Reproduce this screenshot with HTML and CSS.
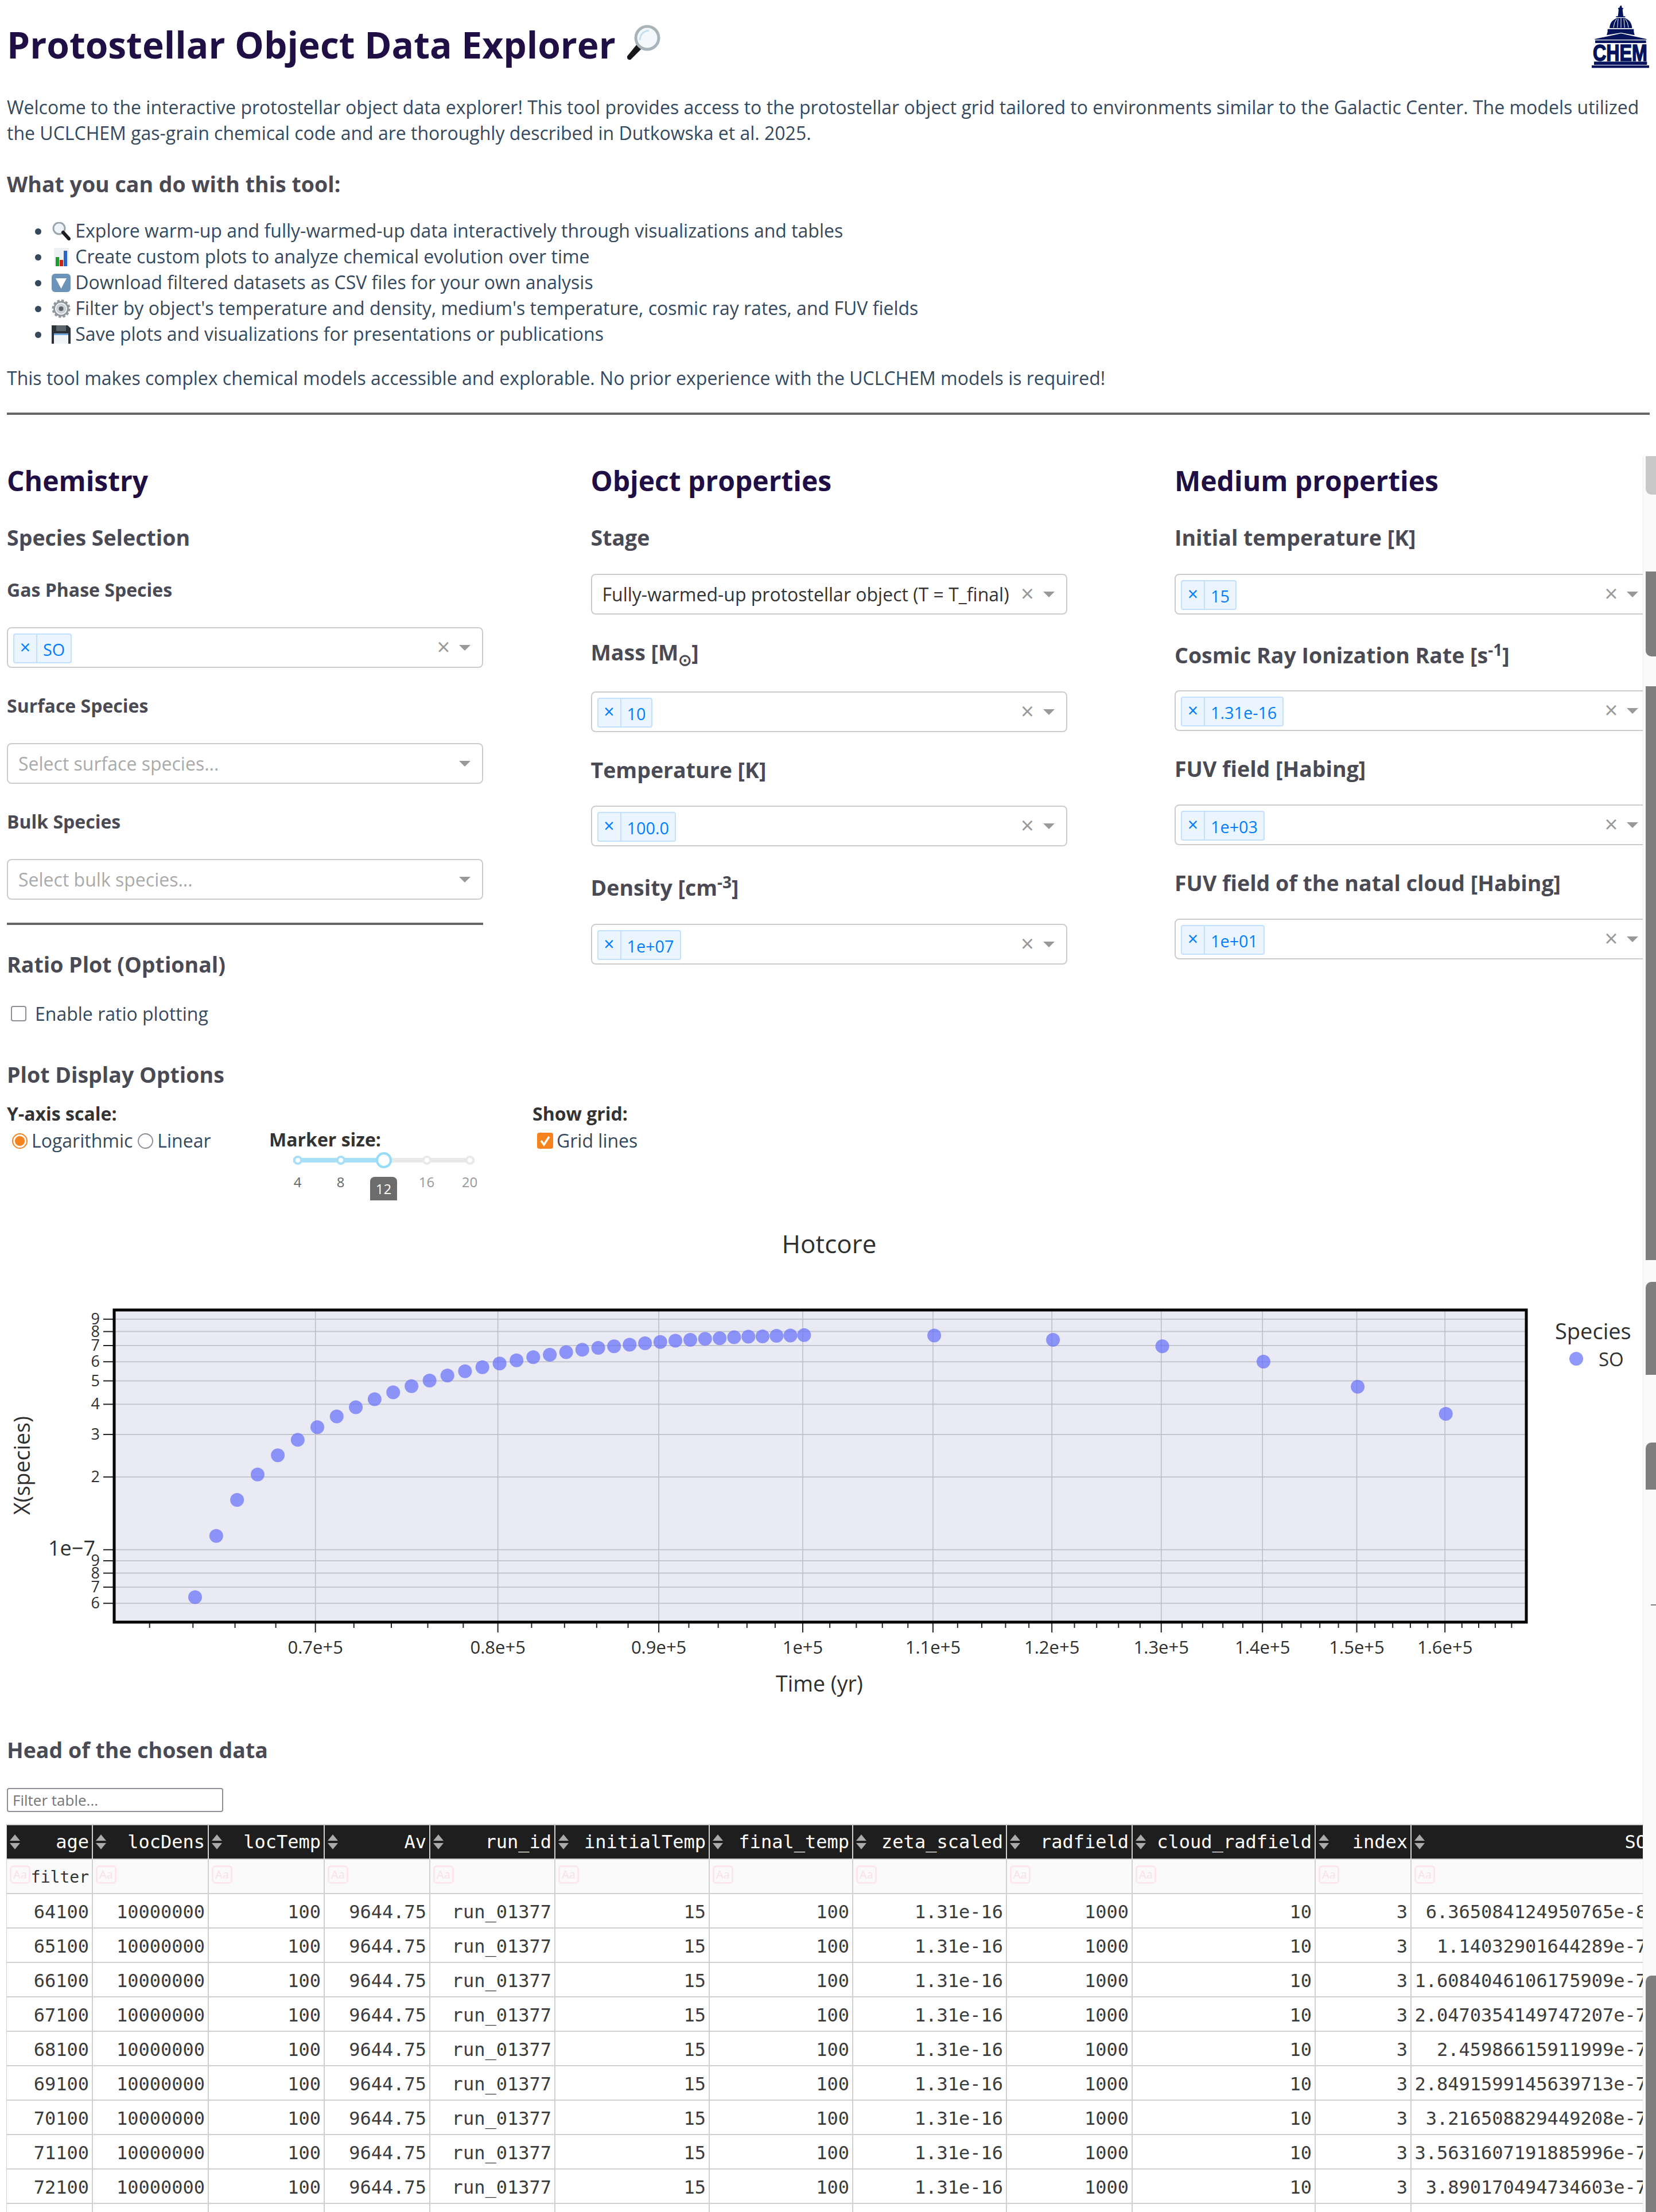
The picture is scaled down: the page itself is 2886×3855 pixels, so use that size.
FILE: index.html
```html
<!DOCTYPE html>
<html lang="en">
<head>
    <meta charset="UTF-8">
    <title>Protostellar Object Data Explorer</title>
    <link rel="stylesheet" href="styles.css">
</head>
<body>
    <div class="page">
        <header class="top">
            <h1>Protostellar Object Data Explorer
                <svg class="emoji-title" viewBox="0 0 64 64">
                    <path d="M4 56 L22 34 L30 42 L10 62 Q3 63 4 56Z" fill="#15171a"/>
                    <circle cx="39" cy="24" r="20" fill="#f4f8fb" stroke="#a9b4ba" stroke-width="5"/>
                    <path d="M26 28 Q27 13 42 11" fill="none" stroke="#c5e0f2" stroke-width="3"/>
                </svg>
            </h1>
            <svg class="logo" viewBox="822 28 300 330">
                <path fill="#04145c" d="M972 30h6l2 12h6v8h-3l4 36h8l4 5h-52l4-5h8l4-36h-3v-8h6z"/>
                <path fill="#04145c" d="M915 148Q918 106 958 95h34Q1030 106 1033 148z"/>
                <path stroke="#fff" stroke-width="3" d="M936 146Q938 118 952 100M956 146L960 98M975 146V96M994 146L990 98M1014 146Q1012 118 998 100" fill="none"/>
                <path fill="#04145c" d="M905 153h137v14l4 18-71-13-75 13 5-18z"/>
                <path fill="#04145c" d="M838 205L975 176 1108 205v3H838z"/>
                <rect fill="#04145c" x="840" y="212" width="266" height="14"/>
                <text class="logo-text" x="828" y="320" textLength="284" lengthAdjust="spacingAndGlyphs">CHEM</text>
                <rect fill="#04145c" x="834" y="323" width="277" height="17"/>
                <rect fill="#04145c" x="822" y="343" width="300" height="13"/>
            </svg>
        </header>

        <p class="intro">Welcome to the interactive protostellar object data explorer! This tool provides access to the protostellar object grid tailored to environments similar to the Galactic Center. The models utilized the UCLCHEM gas-grain chemical code and are thoroughly described in Dutkowska et al. 2025.</p>

        <h3 class="what">What you can do with this tool:</h3>
        <ul class="features">
            <li><svg class="emoji" viewBox="0 0 33 32"><circle cx="13" cy="11" r="10" fill="#eef5fa" stroke="#9aa6ad" stroke-width="3"/><path d="M20 18L30 29" stroke="#1b1d20" stroke-width="6" stroke-linecap="round"/></svg> Explore warm-up and fully-warmed-up data interactively through visualizations and tables</li>
            <li><svg class="emoji" viewBox="0 0 33 32"><rect x="4" y="0" width="26" height="32" fill="#eef1f4"/><rect x="7" y="16" width="6" height="16" fill="#1c9a2e"/><rect x="14" y="21" width="6" height="11" fill="#d3201f"/><rect x="21" y="5" width="6" height="27" fill="#2a66c8"/></svg> Create custom plots to analyze chemical evolution over time</li>
            <li><svg class="emoji" viewBox="0 0 33 32"><rect x="0" y="0" width="33" height="32" rx="6" fill="#6c93b8"/><path d="M7 8H26L16.500 26z" fill="#fff"/></svg> Download filtered datasets as CSV files for your own analysis</li>
            <li><svg class="emoji" viewBox="0 0 33 32"><circle cx="16.500" cy="16" r="12" fill="none" stroke="#8d979d" stroke-width="3"/><circle cx="16.500" cy="16" r="13.500" fill="none" stroke="#8d979d" stroke-width="5" stroke-dasharray="4 3.070"/><circle cx="16.500" cy="16" r="9" fill="#c9d0d4"/><circle cx="16.500" cy="16" r="4" fill="#59636a"/></svg> Filter by object's temperature and density, medium's temperature, cosmic ray rates, and FUV fields</li>
            <li><svg class="emoji" viewBox="0 0 33 32"><path d="M0 0H28L33 5V32H0z" fill="#2c3238"/><rect x="8" y="0" width="17" height="10" fill="#59636a"/><rect x="4" y="14" width="25" height="18" fill="#f1f3f5"/><rect x="4" y="14" width="25" height="3" fill="#6fa6d8"/></svg> Save plots and visualizations for presentations or publications</li>
        </ul>
        <p class="outro">This tool makes complex chemical models accessible and explorable. No prior experience with the UCLCHEM models is required!</p>
        <hr class="rule">

        <div class="columns">
            <section class="col">
                <h2>Chemistry</h2>
                <h3 class="sub">Species Selection</h3>
                <h4 class="small-label">Gas Phase Species</h4>
                <div class="select"><span class="chip"><span class="chip-x">×</span><span class="chip-val">SO</span></span><span class="clear">×</span><span class="arrow"></span></div>
                <h4 class="small-label">Surface Species</h4>
                <div class="select"><span class="placeholder">Select surface species...</span><span class="arrow only"></span></div>
                <h4 class="small-label">Bulk Species</h4>
                <div class="select"><span class="placeholder">Select bulk species...</span><span class="arrow only"></span></div>
                <hr class="rule-small">
                <h3 class="ratio-title">Ratio Plot (Optional)</h3>
                <label class="ratio-check"><span class="box"></span>Enable ratio plotting</label>
            </section>

            <section class="col">
                <h2>Object properties</h2>
                <h3 class="sub">Stage</h3>
                <div class="select first"><span class="value">Fully-warmed-up protostellar object (T = T_final)</span><span class="clear">×</span><span class="arrow"></span></div>
                <h3 class="field mass">Mass [M<sub>⊙</sub>]</h3>
                <div class="select"><span class="chip"><span class="chip-x">×</span><span class="chip-val">10</span></span><span class="clear">×</span><span class="arrow"></span></div>
                <h3 class="field">Temperature [K]</h3>
                <div class="select"><span class="chip"><span class="chip-x">×</span><span class="chip-val">100.0</span></span><span class="clear">×</span><span class="arrow"></span></div>
                <h3 class="field density">Density [cm<sup>-3</sup>]</h3>
                <div class="select"><span class="chip"><span class="chip-x">×</span><span class="chip-val">1e+07</span></span><span class="clear">×</span><span class="arrow"></span></div>
            </section>

            <section class="col">
                <h2>Medium properties</h2>
                <h3 class="sub">Initial temperature [K]</h3>
                <div class="select first"><span class="chip"><span class="chip-x">×</span><span class="chip-val">15</span></span><span class="clear">×</span><span class="arrow"></span></div>
                <h3 class="field cosmic">Cosmic Ray Ionization Rate [s<sup>-1</sup>]</h3>
                <div class="select"><span class="chip"><span class="chip-x">×</span><span class="chip-val">1.31e-16</span></span><span class="clear">×</span><span class="arrow"></span></div>
                <h3 class="field">FUV field [Habing]</h3>
                <div class="select"><span class="chip"><span class="chip-x">×</span><span class="chip-val">1e+03</span></span><span class="clear">×</span><span class="arrow"></span></div>
                <h3 class="field">FUV field of the natal cloud [Habing]</h3>
                <div class="select"><span class="chip"><span class="chip-x">×</span><span class="chip-val">1e+01</span></span><span class="clear">×</span><span class="arrow"></span></div>
            </section>
        </div>

        <h3 class="options-title">Plot Display Options</h3>
        <div class="options">
            <div class="opt-scale">
                <div class="opt-label">Y-axis scale:</div>
                <div class="radios">
                    <span class="radio on"></span><span class="radio-text">Logarithmic</span>
                    <span class="radio"></span><span class="radio-text">Linear</span>
                </div>
            </div>
            <div class="opt-marker">
                <div class="opt-label">Marker size:</div>
                <div class="slider">
                    <span class="dot on"></span><span class="dot on"></span><span class="dot handle"></span><span class="dot"></span><span class="dot"></span>
                </div>
                <div class="marks">
                    <span class="mark done">4</span><span class="mark done">8</span><span class="mark"><span class="tag">12</span></span><span class="mark">16</span><span class="mark">20</span>
                </div>
            </div>
            <div class="opt-grid">
                <div class="opt-label">Show grid:</div>
                <div class="grid-check">
                    <svg class="tick-box" viewBox="0 0 28 28"><rect width="28" height="28" rx="4" fill="#f5831f"/><path d="M7 14L12 21L21 7" fill="none" stroke="#fff" stroke-width="3.500"/></svg>
                    <span>Grid lines</span>
                </div>
            </div>
        </div>

        <svg id="chart" class="chart" viewBox="0 2100 2886 900"></svg>

        <h3 class="data-title">Head of the chosen data</h3>
        <input class="table-filter" type="text" placeholder="Filter table...">
        <div class="table-wrap">
            <table class="data-table">
                <thead><tr id="head-row"></tr></thead>
                <tbody id="table-body"></tbody>
            </table>
        </div>
    </div>

    <div class="scrollbars">
        <span class="thumb light t1"></span>
        <span class="thumb t2"></span>
        <span class="thumb t3"></span>
        <span class="thumb t4"></span>
        <span class="thumb t5"></span>
        <span class="thumb t7"></span>
        <span class="thumb t6"></span>
    </div>

    <script src="script.js"></script>
</body>
</html>
```

FILE: styles.css
```css
html, body {
    margin: 0;
    padding: 0;
    background: #fff;
}
body {
    width: 2886px;
    height: 3855px;
    overflow: hidden;
    position: relative;
    font-family: "Open Sans", "Noto Sans", sans-serif;
    font-size: 32px;
    line-height: 45px;
    color: #34495e;
}
.page {
    padding: 0 12px;
}

/* top text */
.top {
    display: flex;
    justify-content: space-between;
    align-items: flex-start;
    height: 164px;
}
h1 {
    margin: 39px 0 0;
    font-size: 64px;
    line-height: 78px;
    font-weight: 700;
    color: #1f0f45;
    white-space: nowrap;
}
.emoji-title {
    width: 64px;
    height: 64px;
    vertical-align: -4px;
}
.logo {
    width: 100px;
    height: 110px;
    margin: 9px 0 0;
}
.logo-text {
    font-family: "Liberation Sans", sans-serif;
    font-weight: 700;
    font-size: 122px;
    fill: #04145c;
    stroke: #04145c;
    stroke-width: 5px;
}
.intro, .outro {
    margin: 0;
}
.what {
    margin: 42px 0 0;
    font-size: 37.500px;
    line-height: 50px;
    color: #4a4a55;
}
.features {
    margin: 33px 0 0;
    padding-left: 78px;
    color: #34495e;
}
.emoji {
    width: 33px;
    height: 32px;
    vertical-align: -5px;
}
.outro {
    margin-top: 32px;
}
.rule {
    margin: 38px -1px 0 0;
    border: 0;
    height: 4px;
    background: #666;
}

/* three columns */
.columns {
    display: grid;
    grid-template-columns: 830px 830px 830px;
    column-gap: 187.500px;
    height: 1040px;
    margin-top: 85px;
}
.col h2 {
    margin: 0;
    font-size: 48px;
    line-height: 60px;
    color: #1f0f45;
}
.sub {
    margin: 44px 0 0;
    font-size: 37.500px;
    line-height: 50px;
    color: #4a4a55;
}
.small-label {
    margin: 44px 0 43px;
    font-size: 32px;
    line-height: 44px;
    color: #4a4a55;
}
.select {
    display: flex;
    align-items: flex-start;
    box-sizing: border-box;
    height: 71px;
    padding: 9px 0 0 9px;
    border: 2px solid #ccc;
    border-radius: 8px;
    background: #fff;
    font-size: 32px;
    line-height: 50px;
}
.select.first {
    margin-top: 38px;
}
.chip {
    display: flex;
    height: 52px;
    box-sizing: border-box;
    border: 2px solid #c2e0ff;
    border-radius: 4px;
    background: #ebf5ff;
    color: #007eff;
    line-height: 52px;
    font-size: 28.800px;
}
.chip-x {
    width: 38px;
    text-align: center;
    border-right: 2px solid #c2e0ff;
    font-size: 32px;
    line-height: 44px;
}
.chip-val {
    padding: 0 10px;
}
.placeholder {
    padding-left: 9px;
    color: #aaa;
}
.value {
    padding-left: 9px;
    color: #333;
    white-space: nowrap;
}
.clear {
    margin-left: auto;
    width: 36px;
    text-align: center;
    color: #999;
    font-size: 40px;
    line-height: 46px;
}
.arrow {
    width: 0;
    height: 0;
    margin: 20px 20px 0 9px;
    border-style: solid;
    border-width: 10px 10px 0;
    border-color: #999 transparent transparent;
}
.arrow.only {
    margin-left: auto;
}
.field {
    margin: 41px 0 37px;
    font-size: 37.500px;
    line-height: 50px;
    color: #4a4a55;
}
.field.mass {
    margin-bottom: 43px;
}
.field.density {
    margin: 47px 0 38px;
}
.field.cosmic {
    margin: 46px 0 36px;
}
.field sup, .field sub {
    font-size: 28px;
    line-height: 0;
}
.rule-small {
    margin: 40px 0 0;
    border: 0;
    height: 4px;
    background: #666;
}
.ratio-title {
    margin: 44px 0 0;
    font-size: 37.500px;
    line-height: 50px;
    color: #4a4a55;
}
.ratio-check {
    display: flex;
    align-items: center;
    margin: 38px 0 0 7px;
    color: #34495e;
}
.box {
    box-sizing: border-box;
    width: 27px;
    height: 27px;
    margin-right: 15px;
    border: 2px solid #8e8e9a;
    border-radius: 4px;
}

/* plot options */
.options-title {
    margin: 0;
    font-size: 37.500px;
    line-height: 50px;
    color: #4a4a55;
}
.options {
    display: grid;
    grid-template-columns: 457px 459px 1fr;
    height: 179px;
    margin-top: 22px;
    font-size: 32px;
    line-height: 44px;
}
.opt-label {
    font-size: 32px;
    font-weight: 700;
    color: #333;
    line-height: 42px;
}
.opt-marker {
    padding-top: 45px;
}
.radios {
    display: flex;
    align-items: center;
    margin-top: 4px;
    padding-left: 9px;
    color: #34495e;
}
.radio {
    box-sizing: border-box;
    width: 27px;
    height: 27px;
    border: 2px solid #8e8e9a;
    border-radius: 50%;
    margin-right: 7px;
}
.radio.on {
    border-color: #f5831f;
    background: radial-gradient(circle, #f5831f 0 8px, #fff 9px);
}
.radio-text {
    margin-right: 9px;
}
.slider {
    display: flex;
    justify-content: space-between;
    align-items: center;
    width: 316px;
    height: 28px;
    margin: 1px 0 0 42px;
    background: linear-gradient(#a7dff9, #a7dff9) 0 center / 158px 8px no-repeat,
        linear-gradient(#e9e9e9, #e9e9e9) 0 center / 100% 8px no-repeat;
}
.dot {
    box-sizing: border-box;
    width: 16px;
    height: 16px;
    border: 4px solid #e9e9e9;
    border-radius: 50%;
    background: #fff;
}
.dot.on {
    border-color: #a7dff9;
}
.dot.handle {
    width: 28px;
    height: 28px;
    margin: 0 -6px;
    border-color: #96dbfa;
}
.marks {
    display: flex;
    margin: 7px 0 0 12px;
    font-size: 24px;
    line-height: 34px;
    color: #999;
}
.mark {
    width: 75px;
    text-align: center;
}
.mark.done {
    color: #666;
}
.tag {
    display: inline-block;
    width: 47px;
    height: 41px;
    margin-top: 8px;
    line-height: 42px;
    border-radius: 8px 8px 0 0;
    background: #6c6c6c;
    color: #fff;
}
.opt-grid .grid-check {
    display: flex;
    align-items: center;
    margin-top: 4px;
    padding-left: 8px;
    color: #34495e;
}
.tick-box {
    width: 28px;
    height: 28px;
    margin-right: 6px;
}

/* chart */
.chart {
    display: block;
    width: 2886px;
    height: 900px;
    margin-left: -12px;
    font-family: "Open Sans", sans-serif;
    fill: #2a3f5f;
}
.plot-bg {
    fill: #e9eaf3;
}
.plot-frame {
    fill: none;
    stroke: #000;
    stroke-width: 5px;
}
.grid-line {
    stroke: #c5c6cc;
    stroke-width: 2px;
}
.grid-line.vert {
    stroke: #bbbcc4;
    stroke-width: 1.500px;
}
.tick-line {
    stroke: #222;
    stroke-width: 2px;
}
.pt {
    fill: #636efa;
    fill-opacity: 0.7;
}
.tl {
    fill: #2f2f2f;
}
.tl-x {
    font-size: 31px;
    text-anchor: middle;
}
.tl-y {
    font-size: 27px;
    text-anchor: end;
}
.tl-main {
    font-size: 36px;
    text-anchor: end;
}
.chart-title {
    font-size: 44px;
    text-anchor: middle;
    fill: #2f2f2f;
}
.axis-title {
    font-size: 37.500px;
    text-anchor: middle;
    fill: #2f2f2f;
}
.legend-title {
    font-size: 38px;
    fill: #2f2f2f;
}
.legend-label {
    font-size: 33px;
    fill: #2f2f2f;
}

/* table */
.data-title {
    margin: 26px 0 0;
    font-size: 37.500px;
    line-height: 50px;
    color: #4a4a55;
}
.table-filter {
    display: block;
    box-sizing: border-box;
    width: 377px;
    height: 42px;
    margin-top: 41px;
    padding: 0 8px;
    border: 2px solid #8e8e9a;
    border-radius: 4px;
    font-family: "Open Sans", sans-serif;
    font-size: 26px;
    outline: 0;
}
.table-filter::placeholder {
    color: #757575;
}
.table-wrap {
    width: 2852px;
    margin: 21px 0 0 -1px;
    overflow: hidden;
}
.data-table {
    table-layout: fixed;
    width: 2866px;
    border-collapse: separate;
    border-spacing: 0;
    font-family: "DejaVu Sans Mono", "Liberation Mono", monospace;
    font-size: 32px;
    color: #3c3c3c;
}
.data-table th, .data-table td {
    box-sizing: border-box;
    height: 60px;
    padding: 0 5px;
    border-right: 2px solid #d0d0d0;
    border-bottom: 2px solid #d0d0d0;
    text-align: right;
    white-space: nowrap;
    overflow: hidden;
    font-weight: 400;
    line-height: 58px;
}
.data-table td {
    padding-top: 4px;
    line-height: 54px;
}
.data-table th:first-child, .data-table td:first-child {
    border-left: 1px solid #d0d0d0;
}
.data-table thead th {
    border-top: 2px solid #d0d0d0;
    height: 60px;
    background: #1e1e1e;
    color: #fff;
}
.head-cell {
    display: flex;
    justify-content: space-between;
    align-items: center;
}
.sort {
    flex: none;
    width: 18px;
    height: 26px;
}
.data-table .filter-row td {
    background: #fafafa;
    font-size: 28px;
    color: #333;
}
.filter-cell {
    display: flex;
    justify-content: space-between;
    align-items: center;
}
.aa {
    flex: none;
    box-sizing: border-box;
    width: 36px;
    height: 32px;
    margin-top: -10px;
    border: 3px solid #fde6ee;
    border-radius: 6px;
    font-family: "Open Sans", sans-serif;
    font-size: 20px;
    line-height: 26px;
    text-align: center;
    color: #fbdfe9;
}

/* scrollbar strips on the right */
.scrollbars {
    position: absolute;
    left: 2863px;
    top: 795px;
    width: 23px;
    height: 3060px;
    background: #fafafa;
    border-left: 1px solid #eee;
    box-sizing: border-box;
}
.thumb {
    position: absolute;
    left: 4px;
    width: 18px;
    background: #7f7f7f;
}
.thumb.light {
    background: #c8c8c8;
}
.t1 { top: 0; height: 67px; border-radius: 0 0 0 10px; }
.t2 { top: 201px; height: 148px; border-radius: 0 0 0 10px; }
.t3 { top: 401px; height: 1000px; }
.t4 { top: 1439px; height: 162px; border-radius: 10px 0 0 0; }
.t5 { top: 1719px; height: 82px; border-radius: 10px 0 0 0; }
.t6 { top: 2648px; height: 412px; border-radius: 10px 0 0 0; }
.t7 { top: 2001px; left: 13px; width: 9px; height: 2px; }
```

FILE: script.js
```js
// plot scales, read off the axis
const X_ONE = 1399, X_K = 5483;
const Y_ONE = 2701.8, Y_K = 421;
const NS = 'http://www.w3.org/2000/svg';
const chart = document.getElementById('chart');

function xPos(t) { return X_ONE + X_K * Math.log10(t / 1e5); }
function yPos(v) { return Y_ONE - Y_K * Math.log10(v); }

function add(tag, attrs, text) {
    const el = document.createElementNS(NS, tag);
    for (const k in attrs) el.setAttribute(k, attrs[k]);
    if (text) el.textContent = text;
    chart.appendChild(el);
    return el;
}

const LEFT = 199, RIGHT = 2660, TOP = 2284, BOTTOM = 2828;

add('text', { class: 'chart-title', x: 1445, y: 2185 }, 'Hotcore');
add('rect', { class: 'plot-bg', x: LEFT, y: TOP, width: RIGHT - LEFT, height: BOTTOM - TOP });

// horizontal grid + y labels, values in units of 1e-7
[9, 8, 7, 6, 5, 4, 3, 2, 1, 0.9, 0.8, 0.7, 0.6].forEach(v => {
    const y = yPos(v);
    add('line', { class: 'grid-line', x1: LEFT, x2: RIGHT, y1: y, y2: y });
    add('line', { class: 'tick-line', x1: 180, x2: LEFT, y1: y, y2: y });
    if (v === 1) {
        add('text', { class: 'tl tl-main', x: 166, y: y + 10 }, '1e−7');
    } else {
        add('text', { class: 'tl tl-y', x: 174, y: y + 9 }, String(v < 1 ? v * 10 : v));
    }
});

// x ticks every 0.02e+5, the labelled ones get a grid line
for (let i = 31; i <= 84; i++) {
    const t = i * 2000;
    const x = xPos(t);
    const major = i % 5 === 0 && i >= 35 && i <= 80;
    if (major) {
        add('line', { class: 'grid-line vert', x1: x, x2: x, y1: TOP, y2: BOTTOM });
        const label = t === 100000 ? '1e+5' : (t / 100000).toFixed(1) + 'e+5';
        add('text', { class: 'tl tl-x', x: x, y: 2883 }, label);
    }
    add('line', { class: 'tick-line', x1: x, x2: x, y1: BOTTOM, y2: major ? 2846 : 2838 });
}

add('rect', { class: 'plot-frame', x: LEFT, y: TOP, width: RIGHT - LEFT, height: BOTTOM - TOP });

// SO curve
const soEarly = [0.6365, 1.1403, 1.6084, 2.0470, 2.4599, 2.8492, 3.2165, 3.5632];
const soPixelY = [2453.6, 2439.5, 2427.6, 2416.7, 2407, 2398.3, 2390.7, 2383.7, 2377.2, 2371.7, 2366.3, 2362,
    2357.6, 2353.3, 2350, 2347.3, 2344.6, 2341.9, 2339.8, 2337.6, 2336, 2334.3, 2333.3, 2331.6, 2330.5, 2330,
    2328.9, 2328.4, 2327.8];
soEarly.forEach((v, i) => {
    add('circle', { class: 'pt', cx: xPos(64100 + i * 1000), cy: yPos(v), r: 12 });
});
soPixelY.forEach((y, i) => {
    add('circle', { class: 'pt', cx: xPos(72100 + i * 1000), cy: y, r: 12 });
});
[[110100, 2328.4], [120100, 2336], [130100, 2347.3], [140100, 2373.9], [150100, 2417.8], [160100, 2465]].forEach(([t, y]) => {
    add('circle', { class: 'pt', cx: xPos(t), cy: y, r: 12 });
});

add('text', { class: 'axis-title', x: 1428, y: 2949 }, 'Time (yr)');
add('text', { class: 'axis-title', x: 0, y: 0, transform: 'translate(52 2555) rotate(-90)' }, 'X(species)');
add('text', { class: 'legend-title', x: 2710, y: 2335 }, 'Species');
add('circle', { class: 'pt', cx: 2747, cy: 2369, r: 12 });
add('text', { class: 'legend-label', x: 2786, y: 2382 }, 'SO');

// table
const columns = [
    ['age', 151], ['locDens', 202], ['locTemp', 202], ['Av', 184], ['run_id', 218], ['initialTemp', 269],
    ['final_temp', 250], ['zeta_scaled', 268], ['radfield', 219], ['cloud_radfield', 319], ['index', 167], ['SO', 417]
];
const soValues = [
    '6.365084124950765e-8', '1.14032901644289e-7', '1.6084046106175909e-7', '2.0470354149747207e-7',
    '2.45986615911999e-7', '2.8491599145639713e-7', '3.216508829449208e-7', '3.5631607191885996e-7',
    '3.890170494734603e-7', '4.198e-7'
];
const sortIcon = '<svg class="sort" viewBox="0 0 18 26"><path d="M9 0L18 11H0z" fill="#aaa"/><path d="M0 15H18L9 26z" fill="#aaa"/></svg>';

const headRow = document.getElementById('head-row');
const body = document.getElementById('table-body');
const filterRow = document.createElement('tr');
filterRow.className = 'filter-row';

columns.forEach(([name, width], i) => {
    const th = document.createElement('th');
    th.style.width = width + 'px';
    th.innerHTML = `<div class="head-cell">${sortIcon}<span>${name}</span></div>`;
    headRow.appendChild(th);

    const td = document.createElement('td');
    td.innerHTML = `<div class="filter-cell"><span class="aa">Aa</span>${i === 0 ? '<span>filter</span>' : ''}</div>`;
    filterRow.appendChild(td);
});
body.appendChild(filterRow);

soValues.forEach((so, i) => {
    const row = document.createElement('tr');
    const cells = [64100 + i * 1000, 10000000, 100, 9644.75, 'run_01377', 15, 100, '1.31e-16', 1000, 10, 3, so];
    row.innerHTML = cells.map(c => `<td>${c}</td>`).join('');
    body.appendChild(row);
});
```
